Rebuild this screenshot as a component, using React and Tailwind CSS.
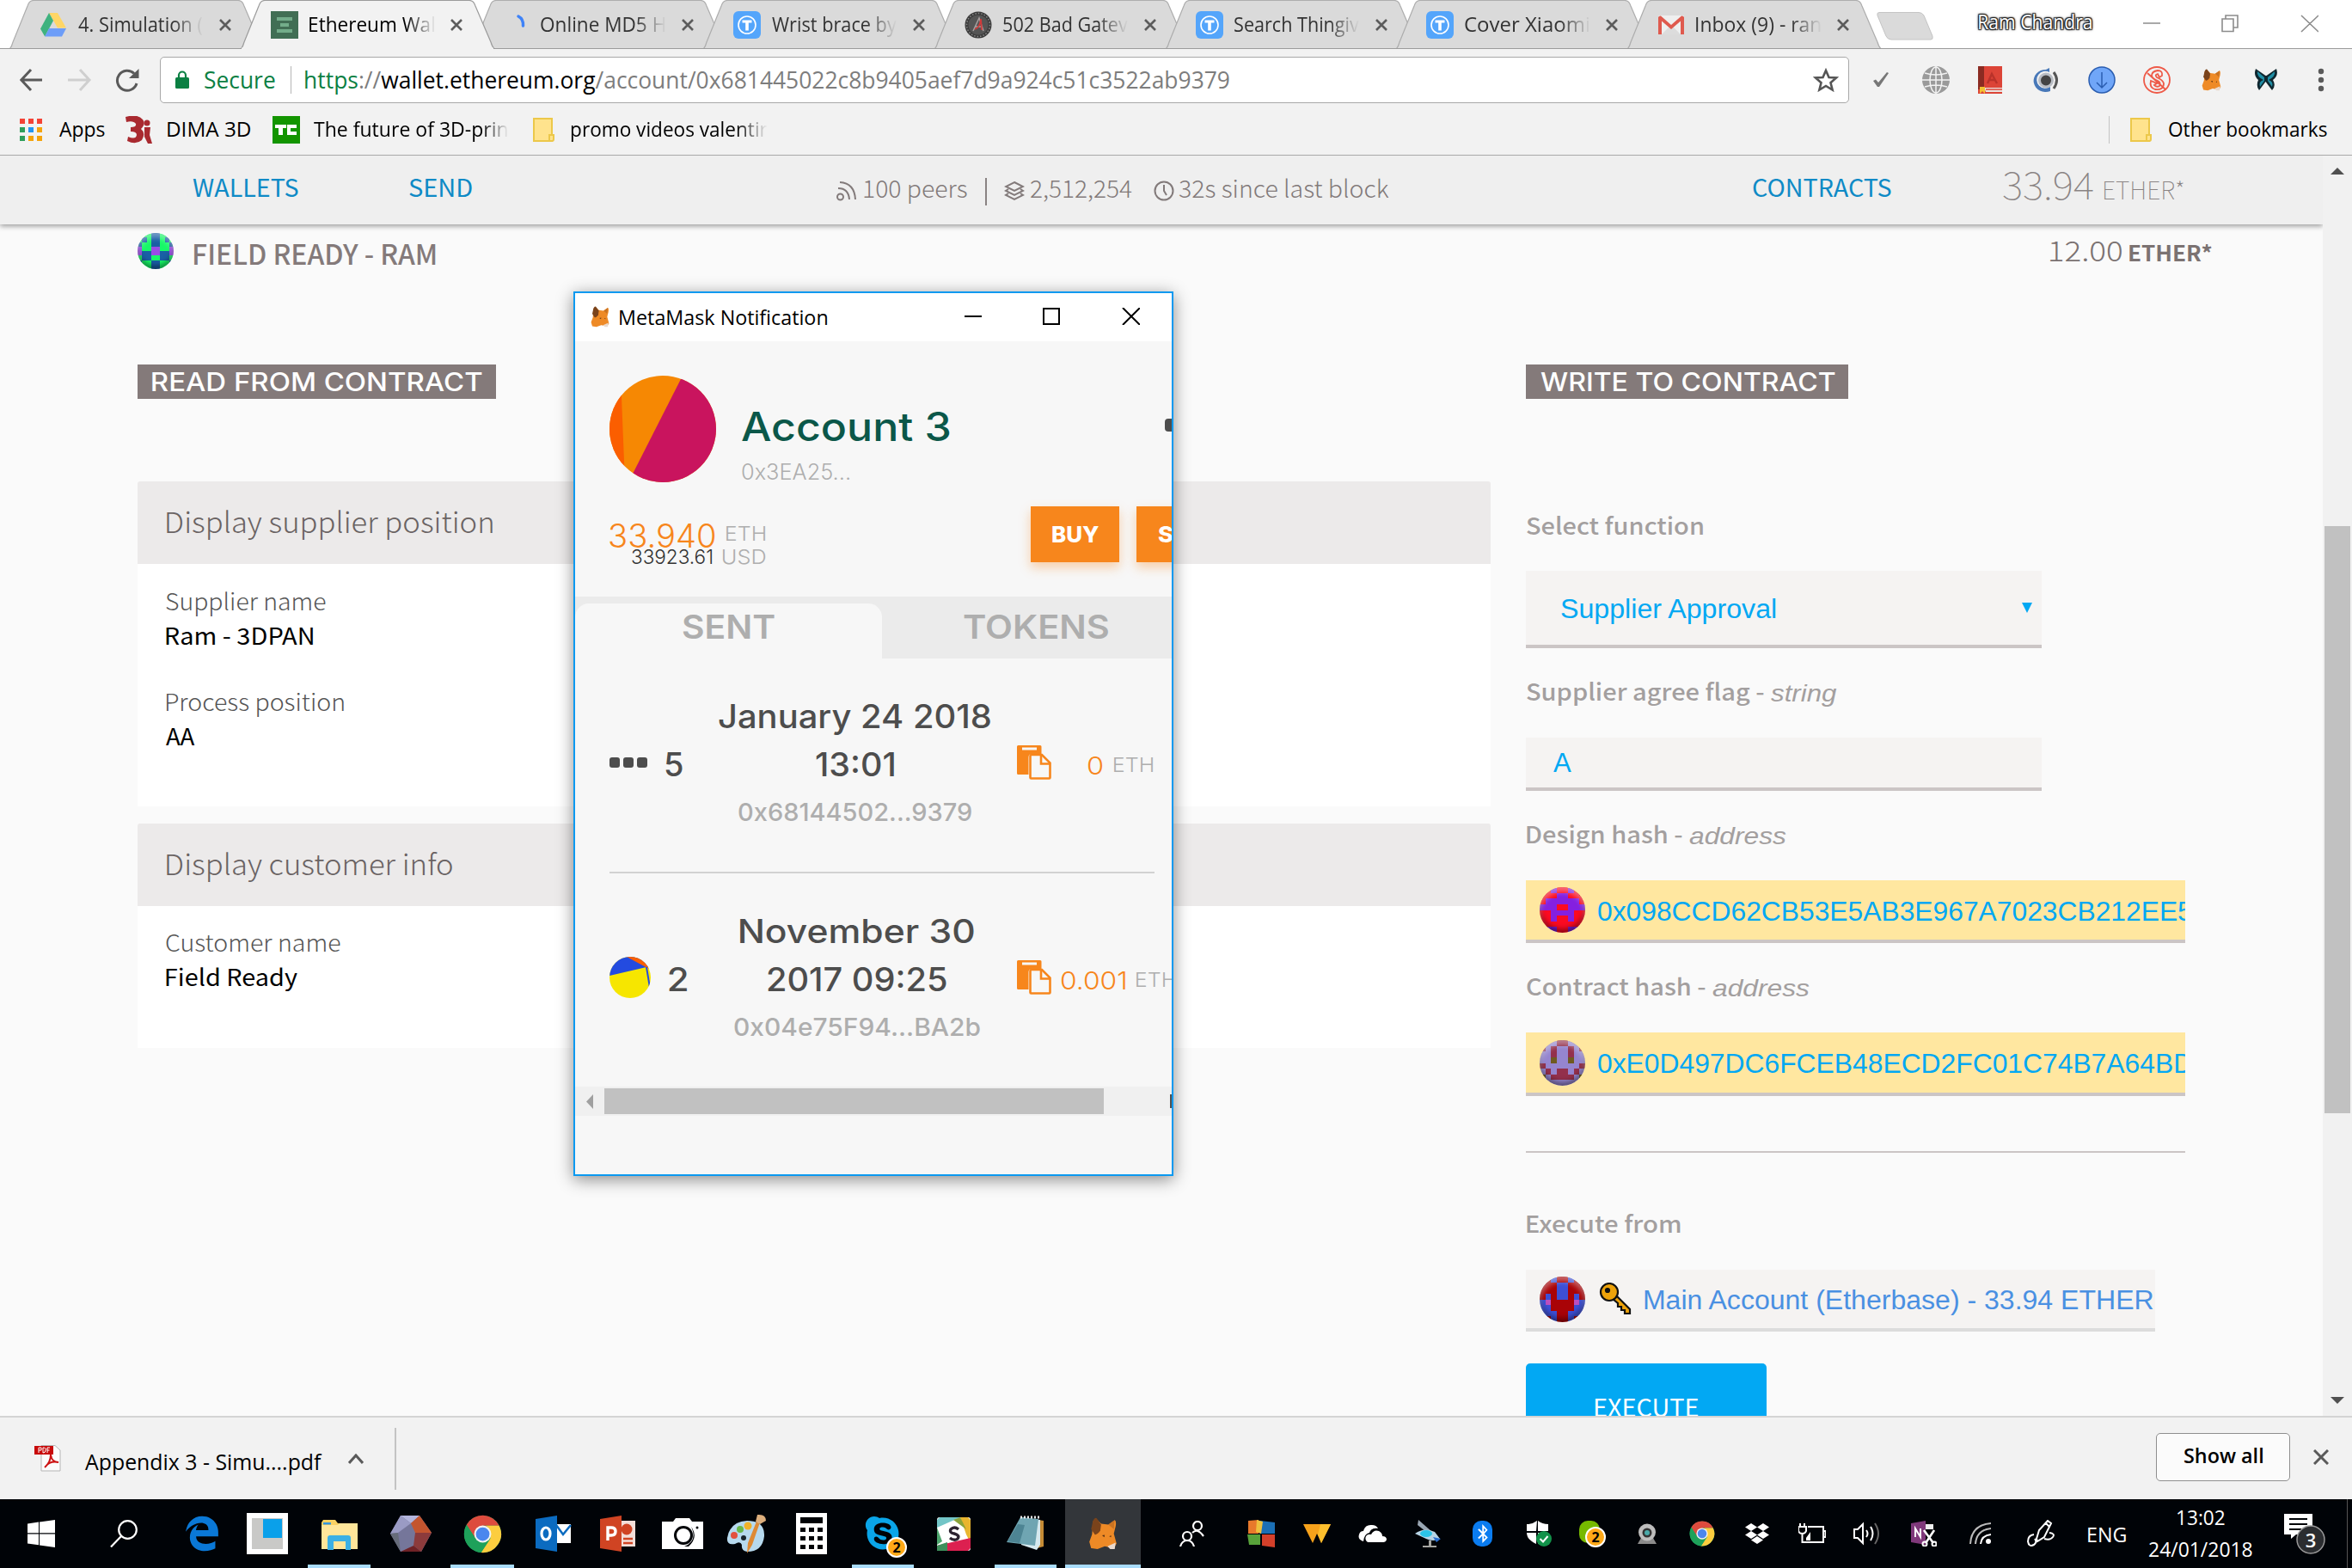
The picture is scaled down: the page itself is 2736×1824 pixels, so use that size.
import React, { useLayoutEffect, useRef } from "react";
import { FaBluetoothB, FaDropbox, FaEdgeLegacy, FaSkype } from "react-icons/fa";

/* Text whose ink fills the width of its box; the box is as tall as the capitals. */
function Fit({ className = "", inner = "", children }) {
  const box = useRef(null);
  const text = useRef(null);
  useLayoutEffect(() => {
    const b = box.current;
    const t = text.current;
    const cs = getComputedStyle(t);
    const ctx = document.createElement("canvas").getContext("2d");
    ctx.font = `${cs.fontStyle} ${cs.fontWeight} ${cs.fontSize} ${cs.fontFamily}`;
    const m = ctx.measureText(t.textContent);
    const ink = m.actualBoundingBoxLeft + m.actualBoundingBoxRight;
    const s = b.clientWidth / ink;
    const asc = m.fontBoundingBoxAscent;
    const desc = m.fontBoundingBoxDescent;
    const base = (t.offsetHeight - asc - desc) / 2 + asc;
    const x = m.actualBoundingBoxLeft * s;
    const y = b.clientHeight - base;
    t.style.transform = `translate(${x}px, ${y}px) scaleX(${s})`;
  }, []);
  return (
    <div ref={box} className={`shrink-0 ${className}`}>
      <div ref={text} className={`w-max origin-top-left whitespace-pre leading-[1.5] ${inner}`}>{children}</div>
    </div>
  );
}

const SRC = "font-['Noto_Sans_CJK_SC',sans-serif]";
const MONT = "font-['Inter',sans-serif]";
const ARIAL = "font-['Liberation_Sans',sans-serif]";

function Identicon({ className, rows, colors }) {
  return (
    <div className={`relative shrink-0 overflow-hidden rounded-full ${className}`}>
      <svg viewBox="0 0 8 8" className="block h-full w-full" shapeRendering="crispEdges">
        {rows.map((r, y) =>
          [...r, ...[...r].reverse()].map((c, x) => (
            <rect key={`${x}-${y}`} x={x} y={y} width="1.02" height="1.02" fill={colors[c]} />
          ))
        )}
      </svg>
      <div className="absolute inset-0 rounded-full shadow-[inset_0_5px_6px_rgba(255,255,255,0.4),inset_0_-4px_6px_rgba(0,0,0,0.45)]" />
    </div>
  );
}

function Fox({ className }) {
  return (
    <svg viewBox="0 0 32 36" className={`shrink-0 ${className}`}>
      <path d="M5 5 Q7 1 10 3 L14 7 L22 8 L29 3 Q31 4 30 10 L28 18 L31 29 L28 34 L18 32 L10 35 L3 34 L1 27 L4 19 Z" fill="#ee8a26" />
      <path d="M5 4 Q7 0 9 1 L14 8 L13 15 Q9 20 7 19 L3 13 Z" fill="#7a431b" />
      <path d="M29 3 L22 8 L28 13 Z" fill="#c97322" />
      <path d="M15 20 L18 19.500 L17.500 22 Z M23 21 L25 20 L25 22 Z" fill="#5b3314" />
      <path d="M21 32 L30 28 L29 35 L24 35 Z" fill="#e9d9cd" />
    </svg>
  );
}

function ChromeLogo({ className }) {
  return (
    <svg viewBox="0 0 48 48" className={`shrink-0 ${className}`}>
      <circle cx="24" cy="24" r="23" fill="#1ea15a" />
      <path d="M4 12.5 A23 23 0 0 1 44.5 13.5 L24 13.5 L15 29 Z" fill="#dd4b3e" />
      <path d="M44.3 13.5 A23 23 0 0 1 22 47 L33.5 29.5 L33 19 L28 13.5 Z" fill="#fccd3f" />
      <path d="M4 12.5 L14.5 29.5 L24 34 L33.5 29.5 L22 47 A23 23 0 0 1 4 12.5 Z" fill="#1ea15a" />
      <circle cx="24" cy="24" r="10.6" fill="#f3f3f3" />
      <circle cx="24" cy="24" r="8.4" fill="#4a87ee" />
    </svg>
  );
}

function PasteIcon({ className }) {
  return (
    <svg viewBox="0 0 40 40" className={`shrink-0 ${className}`} fill="#f7861c">
      <path d="M1.500 0 H27 Q28.500 0 28.500 1.500 V10 H17 Q13.500 10 13.500 14 V34 H1.500 Q0 34 0 32.500 V1.500 Q0 0 1.500 0 Z" />
      <rect x="6" y="2.500" width="17" height="3" fill="#f7f7f7" />
      <path d="M15.500 12 V37.500 Q15.500 38.500 16.500 38.500 H37.500 Q38.500 38.500 38.500 37.500 V20.500 L29 11 H16.500 Q15.500 11 15.500 12 Z" fill="#f7f7f7" stroke="#f7861c" strokeWidth="2.600" />
      <path d="M28 11 V21.500 H38.500" fill="none" stroke="#f7861c" strokeWidth="2.600" />
    </svg>
  );
}

const Drive = () => (
  <svg viewBox="0 0 30 28" className="h-[28px] w-[30px]">
    <path d="M10 0 H20 L30 17.5 H20 Z" fill="#ffd665" />
    <path d="M10 0 L15 9 L5.2 27.5 L0 18.5 Z" fill="#3fb27f" />
    <path d="M10 18 H30 L25 27.5 H5.2 Z" fill="#6d9df8" />
  </svg>
);
const EthDoc = () => (
  <svg viewBox="0 0 32 32" className="h-8 w-8">
    <rect width="32" height="32" fill="#416e54" />
    <path d="M7 7 H25 V11 H7 Z M11 14 H21 V18 H11 Z M7 21 H25 V25 H7 Z" fill="#73ac8a" />
  </svg>
);
const Spinner = () => (
  <svg viewBox="0 0 32 32" className="h-8 w-8">
    <path d="M19 6 Q25 9 24.500 17" fill="none" stroke="#3f83f8" strokeWidth="3.500" strokeLinecap="round" />
  </svg>
);
const Thingi = () => (
  <svg viewBox="0 0 32 32" className="h-8 w-8">
    <rect width="32" height="32" rx="6" fill="#54a5fb" />
    <circle cx="16" cy="16" r="10" fill="none" stroke="#fff" strokeWidth="1.600" />
    <path d="M10.500 10.500 H21.500 V13.500 H17.800 V22.500 H14.200 V13.500 H10.500 Z" fill="#fff" />
  </svg>
);
const Badge502 = () => (
  <svg viewBox="0 0 32 32" className="h-8 w-8">
    <circle cx="16" cy="16" r="15.500" fill="#3c3c3c" />
    <circle cx="16" cy="16" r="11.500" fill="#555" />
    <circle cx="16" cy="16" r="13.500" fill="none" stroke="#8a8a8a" strokeWidth="1.500" strokeDasharray="1.500 2" />
    <path d="M10 23 L17 8 L22 23 M12 18 H21" fill="none" stroke="#a9a0a0" strokeWidth="1.500" />
    <path d="M12 21 Q18 19 19 9 L20 22" fill="none" stroke="#cf3a3a" strokeWidth="1.800" />
  </svg>
);
const Gmail = () => (
  <svg viewBox="0 0 30 22" className="h-[22px] w-[30px]">
    <rect width="30" height="22" rx="1.500" fill="#efefef" />
    <path d="M4 22 L15 11 L26 22 Z" fill="#dcdcdc" />
    <path d="M0 22 V2 Q1 0 3 0.500 L15 11 L27 0.500 Q29 0 30 2 V22 H26 V6.500 L15 16 L4 6.500 V22 Z" fill="#df5a4e" />
  </svg>
);

const TABS = [
  [Drive, "4. Simulation (", false],
  [EthDoc, "Ethereum Wal", true],
  [Spinner, "Online MD5 H", false],
  [Thingi, "Wrist brace by", false],
  [Badge502, "502 Bad Gatev", false],
  [Thingi, "Search Thingiv", false],
  [Thingi, "Cover Xiaomi", false],
  [Gmail, "Inbox (9) - ran", false],
];

function Tab({ Icon, text, active }) {
  return (
    <div className={`relative mr-[-26.100px] h-[57px] w-[295px] shrink-0 ${active ? "z-10" : ""}`}>
      <svg viewBox="0 0 295 57" className="absolute inset-0 h-full w-full">
        <path
          d="M0 57 Q2.500 55 4 49 L21 7 Q23 0.500 28 0.500 H266 Q271 0.500 273 7 L291 49 Q293 56 296 57 Z"
          fill={active ? "#f2f2f2" : "#dadada"}
          stroke={active ? "#9b9b9b" : "#adadad"}
          strokeWidth="1.200"
        />
        {active ? <rect x="1" y="55.500" width="293" height="2" fill="#f2f2f2" /> : <rect y="56" width="295" height="1" fill="#9b9b9b" />}
      </svg>
      <div className="relative flex h-full items-center">
        <div className="ml-[35px] flex w-[32px] justify-center">
          <Icon />
        </div>
        <Fit
          className={`ml-[13px] h-[16px] w-[145px] text-[23.500px] ${active ? "text-black" : "text-[#333]"}`}
          inner="[mask-image:linear-gradient(to_right,black_76%,transparent_100%)]"
        >
          {text}
        </Fit>
        <svg viewBox="0 0 16 16" className="ml-[18px] h-4 w-4">
          <path d="M2 2 L14 14 M14 2 L2 14" stroke="#5c5c5c" strokeWidth="2.600" />
        </svg>
      </div>
    </div>
  );
}

function TabStrip() {
  return (
    <div className="relative flex h-[57px] shrink-0 bg-white">
      <div className="absolute bottom-0 left-0 h-px w-full bg-[#9b9b9b]" />
      <div className="flex pl-[11px]">
        {TABS.map(([Icon, text, active], i) => (
          <Tab key={i} Icon={Icon} text={text} active={active} />
        ))}
      </div>
      <svg viewBox="0 0 68 34" className="mt-[14px] ml-[20px] h-[34px] w-[68px] shrink-0">
        <path d="M4 0.500 H50 Q54 0.500 56 4 L66 28 Q67 32 64 32 H18 Q14 32 12 28 L2 4 Q1 0.500 4 0.500 Z" fill="#dadada" stroke="#c4c4c4" />
      </svg>
      <Fit
        className="mt-[17px] ml-[52px] h-[17px] w-[131px] text-[23px] text-white"
        inner="[text-shadow:0_0_2px_#222,1px_1px_1px_#222,-1px_-1px_1px_#222,1px_-1px_1px_#222,-1px_1px_1px_#222,0_0_4px_#333]"
      >
        Ram Chandra
      </Fit>
      <svg viewBox="0 0 204 21" className="mt-[17px] ml-[60px] h-[21px] w-[204px] shrink-0" fill="none" stroke="#8c8c8c" strokeWidth="1.600">
        <path d="M0 10 H20 M92 5 H105 V19.500 H92 Z M96 5 V1 H110 V15 H105 M184 1 L204 20 M204 1 L184 20" />
      </svg>
    </div>
  );
}

function Toolbar() {
  return (
    <div className="flex h-[72px] shrink-0 items-center pl-[23px]">
      <svg viewBox="0 0 139 28" className="h-[28px] w-[139px] shrink-0" fill="none" strokeWidth="3">
        <path d="M13 2 L1.800 14 L13 26 M2 14 H26" stroke="#5a5a5a" />
        <path d="M70 2 L81 14 L70 26 M80 14 H56" stroke="#cfcfcf" />
        <path d="M136 18 A11.500 11.500 0 1 1 133 6.500" stroke="#5a5a5a" />
        <path d="M138.500 1 V12 H127 Z" fill="#5a5a5a" />
      </svg>
      <div className="ml-[24px] flex h-[54px] w-[1965px] shrink-0 items-center rounded-[5px] border border-[#a8a8a8] bg-white pl-[17px]">
        <svg viewBox="0 0 16 22" className="h-[22px] w-4">
          <rect y="8" width="16" height="13" rx="1.500" fill="#0b8043" />
          <path d="M4 9 V5.500 A4 4 0 0 1 12 5.500 V9" fill="none" stroke="#0b8043" strokeWidth="2.200" />
        </svg>
        <Fit className="ml-[18px] h-[20px] w-[82px] text-[28px] text-[#0b8043]">Secure</Fit>
        <div className="ml-[18px] h-8 w-px bg-[#b5b5b5]" />
        <Fit className="ml-[16px] h-[20px] w-[1075px] text-[28px] text-[#7d7d7d]">
          <span className="text-[#0b8043]">https</span>://<span className="text-black">wallet.ethereum.org</span>
          /account/0x681445022c8b9405aef7d9a924c51c3522ab9379
        </Fit>
        <svg viewBox="0 0 30 28" className="ml-[679px] h-[28px] w-[30px] shrink-0" fill="none" stroke="#555" strokeWidth="2.600">
          <path d="M15 3 L18.500 11 L27 11.500 L20.500 17.200 L22.600 25.500 L15 21 L7.400 25.500 L9.500 17.200 L3 11.500 L11.500 11 Z" />
        </svg>
      </div>
      <svg viewBox="0 0 18 18" className="ml-[28px] h-[18px] w-[18px]">
        <path d="M0 10 L3 8.500 L6 12 L16 0 L18 1 L7 17 H5 Z" fill="#777" />
      </svg>
      <svg viewBox="0 0 32 32" className="ml-[39px] h-8 w-8" fill="none" stroke="#f2f2f2" strokeWidth="1.500">
        <circle cx="16" cy="16" r="16" fill="#9a9a9a" stroke="none" />
        <ellipse cx="16" cy="16" rx="7" ry="15" />
        <path d="M16 0 V32 M0 16 H32 M3 8 Q16 12 29 8 M3 24 Q16 20 29 24" />
      </svg>
      <svg viewBox="0 0 28 32" className="ml-[33px] h-8 w-7">
        <rect width="28" height="32" fill="#dc4437" />
        <rect width="7" height="27" fill="#8b2b22" />
        <path d="M7 25 H28 V30 H9 Z" fill="#e9e2df" />
        <path d="M9 27 H28" stroke="#dc4437" strokeWidth="1.500" />
        <path d="M2 24 H8 V32 L5 29 L2 32 Z" fill="#f2c230" />
        <path d="M11 20 L16 9 L22 20 M13 16 H20" fill="none" stroke="#b9322a" strokeWidth="2.400" />
      </svg>
      <svg viewBox="0 0 30 30" className="ml-[36px] h-[30px] w-[30px]" fill="none">
        <path d="M19 1 V6 A10 10 0 1 0 20 23 V28 A14 13 0 1 1 15 3 Z" fill="#4878b8" />
        <circle cx="15" cy="15.500" r="7.500" stroke="#b9bdc4" strokeWidth="3" fill="#444" />
        <path d="M24 6 Q31 15 24 25" stroke="#555" strokeWidth="3" />
      </svg>
      <svg viewBox="0 0 32 32" className="ml-[34px] h-8 w-8" fill="none" stroke="#2a5db0" strokeWidth="1.500">
        <circle cx="16" cy="16" r="15" fill="#70a6f8" />
        <path d="M16 7 V25 M10 19 L16 25 L22 19" />
      </svg>
      <svg viewBox="0 0 32 32" className="ml-[32px] h-8 w-8" fill="none" stroke="#ee5a48" strokeWidth="1.800">
        <circle cx="16" cy="16" r="15" />
        <path d="M22 11 Q23 5 17 5 Q10 6 10 11 Q11 15 17 17 Q21 19 19 23 Q16 25 13 22 L16 20 L9 17 Q7 25 14 27 Q24 28 24 20 Q23 16 16 13 Q13 10 17 9 L19 13 Z M5 8 L26 27" />
      </svg>
      <Fox className="ml-[35px] h-[26px] w-[25px]" />
      <svg viewBox="0 0 28 26" className="ml-[37px] h-[26px] w-7">
        <path d="M13.500 8 L2 0 Q-1 8 5 13 Q2 20 6 25 L13.500 15 L21 25 Q26 20 22 13 Q29 8 26 0 L14.500 8 Z" fill="#10272f" />
        <path d="M12 10 L4 3 Q3 9 11 13 Q5 15 7 21 L12 14 Z M16 10 L24 3 Q25 9 17 13 Q23 15 21 21 L16 14 Z" fill="#1f8ea5" />
      </svg>
      <svg viewBox="0 0 8 28" className="ml-[46px] h-7 w-2" fill="#5a5a5a">
        <circle cx="4" cy="4" r="3.200" />
        <circle cx="4" cy="14" r="3.200" />
        <circle cx="4" cy="24" r="3.200" />
      </svg>
    </div>
  );
}

const Folder = ({ className }) => (
  <svg viewBox="0 0 25 28" className={`h-7 w-[25px] shrink-0 ${className}`} fill="#ffe38d" stroke="#ecc84a" strokeWidth="2">
    <path d="M1 1 H22 V27 H1 Z" />
    <path d="M19 27 V20 H24 V25 Q24 27 22 27 Z" />
  </svg>
);

const DOTS = ["#f44336", "#f44336", "#f44336", "#2f9e5b", "#2196f3", "#f5a40c", "#2f9e5b", "#f5a40c", "#f5a40c"];

function Bookmarks() {
  return (
    <div className="flex h-[52px] shrink-0 items-center border-b border-[#a9a9a9] pb-[8px] pl-[23px]">
      <div className="grid w-[26px] grid-cols-3 gap-x-[4px] gap-y-[4px]">
        {DOTS.map((c, i) => (
          <svg key={i} viewBox="0 0 6 6" className="h-[6px] w-[6px]">
            <rect width="6" height="6" fill={c} />
          </svg>
        ))}
      </div>
      <Fit className="ml-[20px] h-[17px] w-[53px] text-[24px] text-black">Apps</Fit>
      <svg viewBox="0 0 31 32" className="ml-[24px] h-8 w-[31px]" fill="#a92a30">
        <path d="M0 1 Q14 -3 20 4 Q24 9 18 15 Q24 20 19 28 Q12 34 2 29 L3 24 Q12 28 13 22 Q13 18 6 18 V13 Q13 13 12 9 Q9 5 1 7 Z" />
        <circle cx="25" cy="8" r="3.500" />
        <path d="M22 13 H29 L28 22 L31 32 H26 L22 24 Z" />
      </svg>
      <Fit className="ml-[18px] h-[17px] w-[96px] text-[24px] text-black">DIMA 3D</Fit>
      <svg viewBox="0 0 32 32" className="ml-[26px] h-8 w-8">
        <rect width="32" height="32" fill="#139500" />
        <path d="M3 10 H16 V14 H12 V22 H7 V14 H3 Z M17 10 H28 V14 H21 V18 H28 V22 H17 Z" fill="#fff" />
      </svg>
      <Fit className="ml-[16px] h-[17px] w-[225px] text-[24px] text-black" inner="[mask-image:linear-gradient(to_right,black_86%,transparent_100%)]">
        The future of 3D-prin
      </Fit>
      <Folder className="ml-[30px]" />
      <Fit className="ml-[20px] h-[17px] w-[228px] text-[24px] text-black" inner="[mask-image:linear-gradient(to_right,black_84%,transparent_100%)]">
        promo videos valentir
      </Fit>
      <div className="ml-[1560px] h-8 w-px bg-[#c4c4c4]" />
      <Folder className="ml-[24px]" />
      <Fit className="ml-[20px] h-[17px] w-[184px] text-[24px] text-black">Other bookmarks</Fit>
    </div>
  );
}

function WalletNav() {
  return (
    <div className={`relative z-10 flex h-[80px] w-[2702px] shrink-0 items-start bg-[#efefef] shadow-[0_2px_6px_rgba(0,0,0,0.4)] ${SRC}`}>
      <Fit className="mt-[27px] ml-[224px] h-[21px] w-[123px] text-[28px] text-[#0e8ac6]">WALLETS</Fit>
      <Fit className="mt-[27px] ml-[129px] h-[21px] w-[73px] text-[28px] text-[#0e8ac6]">SEND</Fit>
      <svg viewBox="0 0 24 24" className="mt-[29px] ml-[424px] h-6 w-6 shrink-0" fill="none" stroke="#827a7a" strokeWidth="2">
        <circle cx="4.500" cy="19" r="3.500" />
        <path d="M2 9 Q14 9 15 22 M4 2 Q21 3 22 22" />
      </svg>
      <Fit className="mt-[28px] ml-[8px] h-[21px] w-[120px] text-[28px] font-light text-[#827a7a]">100 peers</Fit>
      <div className="mt-[26px] ml-[21px] h-[32px] w-[1.500px] bg-[#8a8383]" />
      <svg viewBox="0 0 24 24" className="mt-[29px] ml-[20px] h-6 w-6 shrink-0" fill="none" stroke="#827a7a" strokeWidth="2">
        <path d="M12 2 L22 7 L12 12 L2 7 Z M5 10 L2 12 L12 17 L22 12 L19 10 M5 15 L2 17 L12 22 L22 17 L19 15" />
      </svg>
      <Fit className="mt-[28px] ml-[7px] h-[21px] w-[118px] text-[28px] font-light text-[#827a7a]">2,512,254</Fit>
      <svg viewBox="0 0 24 24" className="mt-[29px] ml-[25px] h-6 w-6 shrink-0" fill="none" stroke="#827a7a" strokeWidth="2">
        <circle cx="12" cy="12" r="10.500" />
        <path d="M12 5 V12 L15 17" />
      </svg>
      <Fit className="mt-[28px] ml-[5px] h-[21px] w-[245px] text-[28px] font-light text-[#827a7a]">32s since last block</Fit>
      <Fit className="mt-[27px] ml-[423px] h-[21px] w-[161px] text-[28px] text-[#0e8ac6]">CONTRACTS</Fit>
      <Fit className="mt-[18px] ml-[130px] h-[33px] w-[105px] text-[44px] font-thin text-[#8a8484]">33.94</Fit>
      <Fit className="mt-[30px] ml-[13px] h-[21px] w-[92px] text-[28px] font-thin text-[#8a8484]">ETHER*</Fit>
    </div>
  );
}

const Banner = ({ className, textClass, children }) => (
  <div className={`flex h-[40px] items-center justify-center bg-[#847a7a] ${MONT} ${className}`}>
    <Fit className={`ml-[1px] h-[22px] text-[30px] font-medium text-white ${textClass}`}>{children}</Fit>
  </div>
);

const Key28 = "h-[20px] text-[27px] font-light text-[#555]";
const Val28 = "h-[20px] text-[27px] text-black";

function ReadColumn() {
  return (
    <div className={`flex w-[1574px] shrink-0 flex-col ${SRC}`}>
      <Banner className="w-[417px]" textClass="w-[384px]">READ FROM CONTRACT</Banner>
      <div className="mt-[96px] flex h-[96px] items-center rounded-t-[3px] bg-[#eceaea] pl-[34px]">
        <Fit className="mt-[2px] h-[24px] w-[379px] text-[33px] font-light text-[#6a6363]">Display supplier position</Fit>
      </div>
      <div className="h-[282px] bg-white pt-[35px] pl-[33px]">
        <Fit className={`w-[186px] ${Key28}`}>Supplier name</Fit>
        <Fit className={`mt-[20px] w-[171px] ${Val28}`}>Ram - 3DPAN</Fit>
        <Fit className={`mt-[57px] w-[207px] ${Key28}`}>Process position</Fit>
        <Fit className={`mt-[20px] w-[34px] ${Val28}`}>AA</Fit>
      </div>
      <div className="mt-[20px] flex h-[96px] items-center rounded-t-[3px] bg-[#eceaea] pl-[34px]">
        <Fit className="mt-[2px] h-[24px] w-[332px] text-[33px] font-light text-[#6a6363]">Display customer info</Fit>
      </div>
      <div className="h-[165px] bg-white pt-[34px] pl-[33px]">
        <Fit className={`w-[203px] ${Key28}`}>Customer name</Fit>
        <Fit className={`mt-[20px] w-[153px] ${Val28}`}>Field Ready</Fit>
      </div>
    </div>
  );
}

function Label({ className, width, type, typeWidth, children }) {
  return (
    <div className={`flex items-end gap-[8px] pl-px text-[#a39f9f] ${className}`}>
      <Fit className={`h-[20px] text-[27px] font-medium ${SRC} ${width}`}>{children}</Fit>
      {type && <Fit className={`h-[20px] text-[28px] italic ${ARIAL} ${typeWidth}`}>{type}</Fit>}
    </div>
  );
}

function HashField({ className, rows, colors, children }) {
  return (
    <div className={`flex w-[767px] items-center overflow-hidden border-b-4 border-[#cbc5c5] bg-[#ffe7a0] pl-[16px] ${className}`}>
      <Identicon className="h-[53px] w-[53px]" rows={rows} colors={colors} />
      <Fit className={`mt-[1px] ml-[15px] h-[23px] w-[691px] text-[32px] text-[#02a8f3] ${ARIAL}`}>{children}</Fit>
    </div>
  );
}

function WriteColumn() {
  return (
    <div className="flex w-[767px] shrink-0 flex-col">
      <Banner className="w-[375px]" textClass="w-[343px]">WRITE TO CONTRACT</Banner>
      <Label className="mt-[139px]" width="w-[205px]">Select function</Label>
      <div className="mt-[41px] flex h-[90px] w-[600px] items-center justify-between border-b-4 border-[#cbc5c5] bg-[#f5f3f2] pr-[11px] pl-[41px]">
        <Fit className={`mt-[4px] h-[22px] w-[251px] text-[31px] text-[#02a8f3] ${ARIAL}`}>Supplier Approval</Fit>
        <svg viewBox="0 0 12 12" className="h-3 w-3">
          <path d="M0 0 H12 L6 12 Z" fill="#02a8f3" />
        </svg>
      </div>
      <Label className="mt-[42px]" width="w-[276px]" type="string" typeWidth="w-[77px]">Supplier agree flag -</Label>
      <div className="mt-[42px] flex h-[62px] w-[600px] items-center border-b-4 border-[#cbc5c5] bg-[#f5f3f2] pl-[32px]">
        <Fit className={`mt-[2px] h-[22px] w-[21px] text-[31px] text-[#02a8f3] ${ARIAL}`}>A</Fit>
      </div>
      <Label className="mt-[42px]" width="w-[181px]" type="address" typeWidth="w-[113px]">Design hash -</Label>
      <HashField
        className="mt-[42px] h-[73px]"
        rows={["rrpr", "rrrp", "rppp", "pppr", "rrpp", "rrpr", "rrrr", "rpPr"]}
        colors={{ r: "#fb0a22", p: "#8420e0", P: "#7a1bd0" }}
      >
        0x098CCD62CB53E5AB3E967A7023CB212EE5
      </HashField>
      <Label className="mt-[42px]" width="w-[208px]" type="address" typeWidth="w-[113px]">Contract hash -</Label>
      <HashField
        className="mt-[42px] h-[74px]"
        rows={["lllb", "blbl", "llbl", "llol", "blll", "lblb", "olbb", "llll"]}
        colors={{ l: "#9585cf", b: "#93304c", o: "#6f5a20" }}
      >
        0xE0D497DC6FCEB48ECD2FC01C74B7A64BD
      </HashField>
      <div className="mt-[64px] h-[2px] bg-[#cbc5c5]" />
      <Label className="mt-[74px]" width="w-[179px]">Execute from</Label>
      <div className="mt-[42px] flex h-[72px] w-[732px] items-center border-b-4 border-[#dcdcdc] bg-[#f5f3f2] pl-[16px]">
        <Identicon
          className="h-[53px] w-[53px]"
          rows={["rrbr", "rrrb", "rrrb", "rbrb", "bprr", "bbrr", "bbbr", "rrbr"]}
          colors={{ r: "#a90307", b: "#3d4fd6", p: "#bb4fc0" }}
        />
        <svg viewBox="0 0 38 38" className="ml-[16px] h-[38px] w-[38px] shrink-0" fill="#eda20a" stroke="#111" strokeWidth="2.200">
          <path d="M20 15 L36 31 V36 H30 V32 H26 V28 H22 V24 L16 19 Z" />
          <circle cx="12" cy="11" r="10" />
          <circle cx="10" cy="9" r="2" fill="#111" />
        </svg>
        <Fit className={`mt-[4px] ml-[15px] h-[22px] w-[593px] text-[31px] text-[#4a90e2] ${ARIAL}`}>Main Account (Etherbase) - 33.94 ETHER</Fit>
      </div>
      <div className={`mt-[37px] flex h-[120px] w-[280px] shrink-0 justify-center rounded-[5px] bg-[#02a8f3] pt-[42px] ${SRC}`}>
        <Fit className="h-[20px] w-[120px] text-[28px] text-white">EXECUTE</Fit>
      </div>
    </div>
  );
}

function Scrollbar() {
  return (
    <div className="flex h-full w-[34px] shrink-0 flex-col items-center bg-[#f1f1f1]">
      <svg viewBox="0 0 16 8" className="mt-[14px] h-2 w-4">
        <path d="M0 8 L8 0 L16 8 Z" fill="#505050" />
      </svg>
      <div className="mt-[409px] h-[683px] w-[30px] bg-[#c1c1c1]" />
      <svg viewBox="0 0 16 8" className="mt-[330px] h-2 w-4">
        <path d="M0 0 L8 8 L16 0 Z" fill="#505050" />
      </svg>
    </div>
  );
}

function WalletPage() {
  return (
    <div className="flex h-[1466px] shrink-0 overflow-hidden bg-[#fafafa]">
      <div className="flex w-[2702px] shrink-0 flex-col overflow-hidden">
        <WalletNav />
        <div className={`flex items-start pt-[10px] pl-[160px] ${SRC}`}>
          <Identicon
            className="h-[42px] w-[42px]"
            rows={["gggb", "gbgb", "bggb", "pggp", "pbbp", "gbbg", "bggb", "gggb"]}
            colors={{ g: "#17f868", b: "#195fa5", p: "#9a4be6" }}
          />
          <Fit className="mt-[14px] ml-[24px] h-[24px] w-[281px] text-[33px] font-medium text-[#847a7a]">FIELD READY - RAM</Fit>
          <Fit className="mt-[10px] ml-[1878px] h-[24px] w-[83px] text-[33px] font-light text-[#7b7272]">12.00</Fit>
          <Fit className="mt-[16px] ml-[9px] h-[18px] w-[96px] text-[25px] font-bold text-[#7b7272]">ETHER*</Fit>
        </div>
        <div className="mt-[111px] flex gap-[41px] pl-[160px]">
          <ReadColumn />
          <WriteColumn />
        </div>
      </div>
      <Scrollbar />
    </div>
  );
}

function TxRow({ className, icon, nonce, nonceWidth, lines, colClass, address, addressWidth, amount, amountClass }) {
  return (
    <div className={`flex w-[800px] items-center pl-[40px] ${className}`}>
      <div className="flex w-[121px] shrink-0 items-center">
        {icon}
        <Fit className={`mt-[4px] h-[28px] text-[38px] font-medium text-[#4d4d4d] ${nonceWidth}`}>{nonce}</Fit>
      </div>
      <div className={`flex w-[330px] shrink-0 flex-col items-center text-[#4d4d4d] ${colClass}`}>
        <Fit className={`h-[28px] text-[38px] font-medium ${lines[0][1]}`}>{lines[0][0]}</Fit>
        <Fit className={`mt-[28px] h-[28px] text-[38px] font-medium ${lines[1][1]}`}>{lines[1][0]}</Fit>
        <Fit className={`mt-[31px] h-[21px] text-[29px] font-medium text-[#aeaeae] ${addressWidth}`}>{address}</Fit>
      </div>
      <PasteIcon className="ml-[23px] h-[40px] w-[40px]" />
      <Fit className={`mt-[6px] h-[21px] text-[29px] font-light text-[#f7861c] ${amountClass}`}>{amount}</Fit>
      <Fit className="mt-[4px] ml-[13px] h-[17px] w-[45px] text-[23px] font-light text-[#aeaeae]">ETH</Fit>
    </div>
  );
}

function MetaMask() {
  return (
    <div className={`absolute top-[339px] left-[667px] flex h-[1029px] w-[698px] flex-col overflow-hidden border-2 border-[#0b99f0] bg-[#f7f7f7] ${MONT} shadow-[0_4px_18px_rgba(0,0,0,0.45)]`}>
      <div className="flex h-[56px] w-full shrink-0 items-center bg-white pb-[2px] pl-[17px]">
        <Fox className="h-[25px] w-[24px]" />
        <Fit className="mt-[2px] ml-[11px] h-[17px] w-[241px] font-['Open_Sans',sans-serif] text-[24px] text-black">MetaMask Notification</Fit>
        <svg viewBox="0 0 204 20" className="ml-[160px] h-5 w-[204px] shrink-0" fill="none" stroke="#000" strokeWidth="2">
          <path d="M0 10 H20 M92 1 H110 V19 H92 Z M184 0 L204 20 M204 0 L184 20" />
        </svg>
      </div>
      <div className="flex h-[297px] shrink-0 flex-col pt-[40px] pl-[40px]">
        <div className="flex h-[124px]">
          <div className="h-[124px] w-[124px] shrink-0 overflow-hidden rounded-full">
            <svg viewBox="0 0 124 124" className="block h-full w-full">
              <rect width="124" height="124" fill="#f68803" />
              <path d="M0 0 H13 L18 124 H0 Z" fill="#fb5e00" />
              <path d="M85 0 L22 124 H124 V0 Z" fill="#c9145e" />
            </svg>
          </div>
          <div className="ml-[30px] w-[242px] shrink-0">
            <Fit className="mt-[43px] h-[33px] w-[242px] text-[46px] font-medium text-[#0b5749]">Account 3</Fit>
            <Fit className="mt-[28px] h-[18px] w-[125px] text-[25px] font-light text-[#aeaeae]">0x3EA25...</Fit>
          </div>
          <div className="mt-[50px] ml-[250px] h-[15px] w-[15px] shrink-0 rounded-[4px] bg-[#4d4d4d]" />
        </div>
        <div className="mt-[28px] flex">
          <div className="w-[490px] shrink-0 pt-[20px]">
            <div className="flex items-center">
              <Fit className="h-[28px] w-[123px] text-[38px] font-light text-[#f7861c]">33.940</Fit>
              <Fit className="mt-[-5px] ml-[13px] h-[17px] w-[45px] text-[23px] font-light text-[#aeaeae]">ETH</Fit>
            </div>
            <div className="mt-[2px] flex pl-[26px]">
              <Fit className="h-[17px] w-[93px] text-[23px] font-light text-[#333]">33923.61</Fit>
              <Fit className="ml-[13px] h-[17px] w-[50px] text-[23px] font-light text-[#aeaeae]">USD</Fit>
            </div>
          </div>
          <div className="flex h-[65px] w-[103px] shrink-0 items-center justify-center bg-[#f7861c] shadow-[0_6px_12px_rgba(247,134,28,0.36)]">
            <Fit className="h-[19px] w-[54px] text-[26px] font-extrabold text-white">BUY</Fit>
          </div>
          <div className="ml-[20px] flex h-[65px] w-[124px] shrink-0 items-center justify-center bg-[#f7861c] shadow-[0_6px_12px_rgba(247,134,28,0.36)]">
            <Fit className="h-[19px] w-[74px] text-[26px] font-extrabold text-white">SEND</Fit>
          </div>
        </div>
      </div>
      <div className="flex h-[72px] shrink-0 items-end bg-[#ebebeb]">
        <div className="flex h-[64px] w-[357px] shrink-0 justify-center rounded-t-[16px] bg-[#f7f7f7] pt-[13px]">
          <Fit className="h-[28px] w-[107px] text-[38px] font-semibold text-[#aeaeae]">SENT</Fit>
        </div>
        <div className="flex h-[64px] w-[357px] shrink-0 justify-center pt-[13px]">
          <Fit className="h-[28px] w-[168px] text-[38px] font-semibold text-[#aeaeae]">TOKENS</Fit>
        </div>
      </div>
      <TxRow
        className="mt-[53px] mb-px"
        icon={
          <div className="mr-[21px] flex gap-[4px]">
            <div className="h-[12px] w-[12px] rounded-[3px] bg-[#4d4d4d]" />
            <div className="h-[12px] w-[12px] rounded-[3px] bg-[#4d4d4d]" />
            <div className="h-[12px] w-[12px] rounded-[3px] bg-[#4d4d4d]" />
          </div>
        }
        nonce="5"
        nonceWidth="w-[20px]"
        colClass="pr-[2px]"
        lines={[["January 24 2018", "w-[316px]"], ["13:01", "w-[91px]"]]}
        address="0x68144502...9379"
        addressWidth="w-[271px]"
        amount="0"
        amountClass="ml-[42px] w-[18px]"
      />
      <div className="mt-[58px] ml-[40px] h-[2px] w-[634px] shrink-0 bg-[#d2d2d2]" />
      <TxRow
        className="mt-[53px] mb-px"
        icon={
          <div className="mr-[21px] h-[48px] w-[48px] shrink-0 overflow-hidden rounded-full">
            <svg viewBox="0 0 48 48" className="block h-full w-full">
              <rect width="48" height="48" fill="#f6e600" />
              <path d="M0 0 H48 V13 L43 12 L0 22 Z" fill="#234be0" />
              <path d="M20 0 L46 14 L48 0 Z" fill="#fb5e00" />
              <path d="M42 12 L44 12 L48 36 L46 36 Z" fill="#234be0" />
            </svg>
          </div>
        }
        nonce="2"
        nonceWidth="w-[21px]"
        colClass="pl-[4px]"
        lines={[["November 30", "w-[272px]"], ["2017 09:25", "w-[208px]"]]}
        address="0x04e75F94...BA2b"
        addressWidth="w-[286px]"
        amount="0.001"
        amountClass="ml-[11px] w-[75px]"
      />
      <div className="mt-[58px] flex h-[34px] shrink-0 items-center bg-[#f0f0f0] pl-[13px]">
        <svg viewBox="0 0 8 17" className="h-[17px] w-2">
          <path d="M8 0 L0 8.500 L8 17 Z" fill="#a0a0a0" />
        </svg>
        <div className="ml-[13px] h-[30px] w-[581px] bg-[#c1c1c1]" />
        <div className="ml-auto h-[16px] w-[2px] bg-[#505050]" />
      </div>
    </div>
  );
}

function DownloadBar() {
  return (
    <div className="flex h-[97px] shrink-0 items-center border-t-2 border-[#d4d4d4] bg-[#f2f2f2] pl-[40px]">
      <svg viewBox="0 0 31 31" className="h-[31px] w-[31px]">
        <path d="M8 0.500 H24 L30 6 V30 H8 Z" fill="#fcfcfc" stroke="#b5b5b5" />
        <rect y="1" width="22" height="10" fill="#c80a0a" />
        <path d="M5 9 V3 H8 V6 H5 M10 9 V3 Q14 3 13 6 Q13 9 10 9 M15 9 V3 H18 M15 6 H17.500" fill="none" stroke="#fff" strokeWidth="1" />
        <path d="M12 26 Q19 20 19 11 Q20 20 28 20 Q18 18 13 25" fill="none" stroke="#cc1212" strokeWidth="2" />
      </svg>
      <Fit className="mt-[10px] ml-[28px] h-[18px] w-[276px] text-[25px] text-black">Appendix 3 - Simu....pdf</Fit>
      <svg viewBox="0 0 18 12" className="ml-[30px] h-3 w-[18px]">
        <path d="M1 11 L9 2 L17 11" fill="none" stroke="#5a5a5a" strokeWidth="3" />
      </svg>
      <div className="ml-[36px] h-[72px] w-[2px] bg-[#c4c4c4]" />
      <div className="mb-[4px] ml-[2047px] flex h-[56px] w-[156px] shrink-0 items-center justify-center rounded-[5px] border border-[#8f8f8f] bg-[#fbfbfb]">
        <Fit className="mb-[2px] h-[17px] w-[91px] text-[24px] font-semibold text-black">Show all</Fit>
      </div>
      <svg viewBox="0 0 18 18" className="mb-[3px] ml-[27px] h-[18px] w-[18px]">
        <path d="M1 1 L17 17 M17 1 L1 17" stroke="#5a5a5a" strokeWidth="3" />
      </svg>
    </div>
  );
}

const Slot = ({ className, running, active, children }) => (
  <div className={`relative flex h-full shrink-0 items-center justify-center ${active ? "bg-[#33363a]" : ""} ${className}`}>
    {children}
    {running && <div className="absolute bottom-0 left-0 h-[4px] w-full bg-[#a9dcfb]" />}
  </div>
);

function Taskbar() {
  return (
    <div className="flex h-[80px] shrink-0 items-center bg-[#000307] text-white">
      <svg viewBox="0 0 32 32" className="ml-[32px] h-8 w-8 shrink-0" fill="#fff">
        <path d="M0 4.500 L13 2.600 V15.300 H0 Z M14 2.400 L32 0 V15.300 H14 Z M0 16.400 H13 V29.300 L0 27.500 Z M14 16.400 H32 V32 L14 29.500 Z" />
      </svg>
      <svg viewBox="0 0 32 32" className="ml-[64px] h-8 w-8 shrink-0" fill="none" stroke="#fff" strokeWidth="2.200">
        <circle cx="20.500" cy="11.500" r="10.300" />
        <path d="M13 19 L1 31.500" />
      </svg>
      <FaEdgeLegacy className="ml-[54px] h-[44px] w-[42px] shrink-0 text-[#0a78d6]" />
      <svg viewBox="0 0 48 48" className="ml-[31px] h-12 w-12 shrink-0">
        <rect width="48" height="48" fill="#fff" />
        <rect x="6" y="6" width="36" height="36" fill="#c9c9c7" />
        <rect x="19" y="7" width="22" height="22" fill="#0aa0ea" />
      </svg>
      <Slot className="ml-[23px] w-[73px]" running>
        <svg viewBox="0 0 42 36" className="mt-[3px] h-9 w-[42px]">
          <path d="M0 3 L2 0 H16 L19 4 H41 V34 H0 Z" fill="#f9d163" />
          <path d="M0 6 H19 L21 4 H42 V34 H0 Z" fill="#ffe69a" />
          <rect x="2" y="3" width="9" height="2.500" fill="#3596dc" />
          <path d="M7 35 V21 Q7 18 10 18 H31 Q34 18 34 21 V35 H28 V25 H14 V35 Z" fill="#3bb0e5" />
        </svg>
        <div className="absolute right-0 bottom-0 h-[4px] w-[17px] bg-[#7e9fb3]" />
      </Slot>
      <svg viewBox="0 0 48 42" className="ml-[23px] h-[42px] w-12 shrink-0">
        <path d="M12 0 H34 L48 20 L36 42 H12 L0 21 Z" fill="#75769a" />
        <path d="M12 0 H34 L24 9 Z" fill="#b3b5dd" />
        <path d="M34 0 L48 20 L29 20 L24 9 Z" fill="#c4552f" />
        <path d="M0 21 L12 0 L24 9 L9 20 Z" fill="#9a9bc4" />
        <path d="M29 20 L48 20 L36 42 L27 35 Z" fill="#8c3b3c" />
        <path d="M12 42 L27 35 L36 42 Z" fill="#6f2226" />
        <path d="M0 21 L9 20 L12 42 Z" fill="#666c7a" />
      </svg>
      <Slot className="ml-[22px] w-[74px]" running>
        <ChromeLogo className="h-[45px] w-[45px]" />
      </Slot>
      <svg viewBox="0 0 42 42" className="ml-[25px] h-[42px] w-[42px] shrink-0">
        <path d="M24 10 H41 V32 H24 Z" fill="#fff" />
        <path d="M24 11 L32 22 L41 11" fill="none" stroke="#0b6bc0" strokeWidth="2.500" />
        <path d="M0 4 L25 0 V42 L0 38 Z" fill="#0b6bc0" />
        <ellipse cx="12" cy="21" rx="5" ry="7" fill="none" stroke="#fff" strokeWidth="3.200" />
      </svg>
      <svg viewBox="0 0 42 42" className="ml-[33px] h-[42px] w-[42px] shrink-0">
        <rect x="24" y="6" width="17" height="30" fill="#f3ded8" />
        <path d="M27 27 H38 M27 32 H38" stroke="#d04423" strokeWidth="2.500" />
        <circle cx="31" cy="16" r="6.500" fill="#d04423" />
        <path d="M0 4 L25 0 V42 L0 38 Z" fill="#d04423" />
        <path d="M9 29 V14 H13 Q18 14 18 18.500 Q18 23 13 23 H9" fill="none" stroke="#fff" strokeWidth="3.400" />
      </svg>
      <svg viewBox="0 0 48 36" className="ml-[30px] h-9 w-12 shrink-0">
        <path d="M0 4 H13 L16 0 H32 L35 4 H48 V36 H0 Z" fill="#fff" />
        <circle cx="25" cy="20" r="9.500" fill="none" stroke="#000307" strokeWidth="3" />
        <path d="M34 10 Q43 22 31 33 H26 Q42 26 34 10 Z" fill="#000307" />
        <circle cx="41" cy="11" r="1.500" fill="#000307" />
      </svg>
      <svg viewBox="0 0 48 46" className="ml-[27px] h-[46px] w-12 shrink-0">
        <path d="M24 8 Q45 8 44 26 Q42 44 24 44 Q17 43 18 36 Q16 31 10 35 Q0 37 1 28 Q4 9 24 8 Z" fill="#b6d9ee" />
        <circle cx="9" cy="25" r="4" fill="#e2503e" />
        <circle cx="16" cy="18" r="4" fill="#68b849" />
        <circle cx="25" cy="14" r="4.500" fill="#f0b228" />
        <circle cx="20" cy="28" r="3" fill="#18242c" />
        <path d="M39 10 L30 36 L24 46 L25 34 L35 9 Z" fill="#de8a35" />
        <path d="M36 1 Q46 0 46 8 L39 12 L34 9 Z" fill="#dcae7c" />
      </svg>
      <svg viewBox="0 0 36 48" className="ml-[33px] h-12 w-9 shrink-0">
        <rect width="36" height="48" fill="#fff" />
        <path d="M5 5 H31 V12 H5 Z M5 17 H11 V22 H5 Z M15 17 H21 V22 H15 Z M25 17 H31 V22 H25 Z M5 27 H11 V32 H5 Z M15 27 H21 V32 H15 Z M25 27 H31 V32 H25 Z M5 37 H11 V42 H5 Z M15 37 H21 V42 H15 Z M25 37 H31 V42 H25 Z" fill="#000307" />
      </svg>
      <Slot className="ml-[29px] w-[72px]" running>
        <FaSkype className="h-[46px] w-[46px] text-[#0aa5e8]" />
        <div className="absolute top-[44px] left-[40px] flex h-[24px] w-[24px] items-center justify-center rounded-full border-2 border-white bg-[#ffa918] text-[16px] leading-none font-bold text-black">2</div>
      </Slot>
      <svg viewBox="0 0 39 39" className="ml-[27px] h-[39px] w-[39px] shrink-0">
        <rect width="39" height="39" rx="3" fill="#fff" />
        <path d="M3 0 H27 L0 12 V3 Z" fill="#73c5c7" />
        <path d="M27 0 H36 L39 3 V30 L34 20 Z" fill="#e9b52f" />
        <path d="M27 0 L19 3 L34 14 Z" fill="#8aa33a" />
        <path d="M0 12 L6 28 L0 32 Z" fill="#4ea66e" />
        <path d="M0 39 V33 L39 24 V36 L36 39 Z" fill="#dc2050" />
        <path d="M0 33 L12 29 V39 H0 Z" fill="#3f8f5c" />
        <path d="M25 14 Q20 10 16 14 Q14 18 20 19 Q27 21 24 25 Q20 28 15 24" fill="none" stroke="#2c2330" strokeWidth="3.400" />
      </svg>
      <Slot className="ml-[28px] w-[72px]" running>
        <svg viewBox="0 0 46 40" className="mb-[2px] h-10 w-[46px]">
          <path d="M38 5 L44 6 V36 L36 38 Z" fill="#c48b35" />
          <path d="M17 2 L40 5 L40 34 L36 40 L18 34 Z" fill="#d6e9ee" />
          <path d="M17 2 L38 4 L34 35 L1 31 Z" fill="#6fa5b2" />
          <path d="M14 10 L22 11 L16 32 L2 30 Z" fill="#4d8493" />
          <path d="M17 2 H40" stroke="#e9e9e9" strokeWidth="3" strokeDasharray="2 2" />
        </svg>
      </Slot>
      <Slot className="ml-[10px] w-[88px]" running active>
        <Fox className="h-[38px] w-[34px]" />
      </Slot>
      <svg viewBox="0 0 30 30" className="ml-[45px] h-[30px] w-[30px] shrink-0" fill="none" stroke="#fff" strokeWidth="2.200">
        <circle cx="21" cy="6" r="5" />
        <path d="M15 14 Q21 8 28 18" />
        <circle cx="9" cy="18" r="5" />
        <path d="M1 30 Q3 23 9 23 Q15 23 17 30" />
      </svg>
      <svg viewBox="0 0 33 32" className="ml-[49px] h-8 w-[33px] shrink-0">
        <path d="M1 1 L13 0 V16 H1 Z" fill="#e8792b" />
        <path d="M15 1 L32 3 V16 H14 Z" fill="#1b6fb4" />
        <path d="M0 17 H15 V29 H2 Z" fill="#58a23a" />
        <path d="M17 17 H32 V32 L17 30 Z" fill="#d4402a" />
        <path d="M11 0 L18 2 L16 16 L10 14 Z" fill="#eec03c" />
      </svg>
      <svg viewBox="0 0 32 22" className="ml-[32px] h-[22px] w-8 shrink-0">
        <path d="M0 0 H32 L21 22 L16 11 L11 22 Z" fill="#f7a21b" />
        <path d="M20 0 H32 L21 22 L17 12 Z" fill="#fdbf2d" />
      </svg>
      <svg viewBox="0 0 33 22" className="ml-[32px] h-[22px] w-[33px] shrink-0" fill="#fff">
        <path d="M6 20 Q-1 18 1 12 Q2 8 6 8 Q8 0 16 1 Q21 1 23 5 Q15 4 13 10 Q7 11 6 20 Z" />
        <path d="M11 21 Q7 18 9 14 Q11 11 15 12 Q18 6 24 8 Q28 10 28 14 Q33 14 33 18 Q32 21 29 21 Z" />
      </svg>
      <svg viewBox="0 0 32 32" className="ml-[32px] h-8 w-8 shrink-0">
        <path d="M5 0 L21 14 L18 17 L4 6 Z" fill="#9aa7b4" />
        <path d="M1 16 Q12 8 24 14 L30 22 Q22 26 14 22 Z" fill="#b7d5e6" />
        <ellipse cx="14" cy="16" rx="7" ry="4" fill="#2bc4e8" />
        <path d="M22 20 L31 22 L26 26 Z" fill="#2b6fd0" />
        <path d="M17 24 H20 V30 H26 V32 H10 V30 H17 Z" fill="#a5a5a0" />
      </svg>
      <div className="ml-[36px] flex h-[30px] w-[23px] shrink-0 items-center justify-center rounded-[10px] bg-[#0a7cf0]">
        <FaBluetoothB className="h-[22px] w-[16px] text-white" />
      </div>
      <svg viewBox="0 0 30 30" className="ml-[39px] h-[30px] w-[30px] shrink-0">
        <path d="M13 0 Q8 4 1 4 V12 H12 Z M14 0 Q19 4 26 4 V12 H14 Z M1 14 H12 V27 Q1 22 1 14 Z M14 14 H26 Q26 22 14 27 Z" fill="#fff" />
        <circle cx="21" cy="21" r="9" fill="#12924a" />
        <path d="M16.500 21 L20 24.500 L25.500 18" fill="none" stroke="#fff" strokeWidth="2" />
      </svg>
      <div className="relative ml-[32px] h-[31px] w-[31px] shrink-0">
        <div className="h-[26px] w-[24px] rounded-[10px] bg-[#76b900]" />
        <div className="absolute right-0 bottom-0 flex h-[24px] w-[24px] items-center justify-center rounded-full border-2 border-white bg-[#ffa918] text-[16px] leading-none font-bold text-black">2</div>
      </div>
      <svg viewBox="0 0 24 24" className="ml-[36px] h-6 w-6 shrink-0">
        <path d="M1 24 L5 17 H19 L23 24 Z" fill="#8b8b8b" />
        <circle cx="12" cy="10.500" r="10" fill="#bdbdbd" />
        <circle cx="12" cy="11" r="5.500" fill="#333" />
        <circle cx="12" cy="11" r="3" fill="#49a9a9" />
      </svg>
      <ChromeLogo className="ml-[37px] h-[30px] w-[30px]" />
      <FaDropbox className="ml-[35px] h-[28px] w-[28px] shrink-0 text-white" />
      <svg viewBox="0 0 32 24" className="ml-[34px] h-6 w-8 shrink-0" fill="none" stroke="#fff" strokeWidth="2">
        <path d="M2 0 V4 M7 0 V4 M0 4 H9 V9 Q8 12 4.500 12 Q1 12 0 9 Z M4.500 12 V22 H29 V4 H11 M29 9 H31.500 V16 H29" />
        <path d="M9 20 V17 L14 10 V20 Z" fill="#fff" stroke="none" />
      </svg>
      <svg viewBox="0 0 32 28" className="ml-[32px] h-7 w-8 shrink-0" fill="none" stroke="#fff" strokeWidth="2">
        <path d="M1 9 H5 L11 3 V25 L5 19 H1 Z M15 10 Q18 14 15 18" />
        <path d="M20 6 Q25 14 20 22" />
        <path d="M25 2 Q33 14 25 26" stroke="#666" />
      </svg>
      <svg viewBox="0 0 30 30" className="ml-[35px] h-[30px] w-[30px] shrink-0">
        <path d="M0 3 L17 0 V28 L0 25 Z" fill="#80397b" />
        <path d="M5 19 V9 L11 19 V9" fill="none" stroke="#fff" strokeWidth="2" />
        <path d="M17 4 H26 V10 H17 Z" fill="#eee" />
        <path d="M15 11 L26 26 M27 11 L17 26" stroke="#fff" strokeWidth="2.600" />
        <circle cx="16" cy="27" r="2.500" fill="none" stroke="#fff" strokeWidth="2" />
        <circle cx="27" cy="27" r="2.500" fill="none" stroke="#fff" strokeWidth="2" />
      </svg>
      <svg viewBox="0 0 26 26" className="ml-[38px] h-[26px] w-[26px] shrink-0" fill="none" stroke="#fff" strokeWidth="2">
        <path d="M1 25 Q2 3 25 1 M7 25 Q8 9 25 7" stroke="#bbb" />
        <path d="M13 25 Q14 15 25 14" />
        <circle cx="22" cy="22" r="3" fill="#fff" stroke="none" />
      </svg>
      <svg viewBox="0 0 33 32" className="ml-[41px] h-8 w-[33px] shrink-0" fill="none" stroke="#fff" strokeWidth="2">
        <path d="M11 22 L14 12 L24 1 L28 4 L20 20 L12 25 Z M22 4 L26 8 M8 17 Q1 18 1 25 Q2 32 8 29 Q12 26 9 22 M26 15 Q33 16 30 20 Q27 24 20 22" />
      </svg>
      <Fit className="mt-[3px] ml-[38px] h-[17px] w-[44px] text-[24px]">ENG</Fit>
      <div className="ml-[27px] flex w-[120px] shrink-0 flex-col items-center">
        <Fit className="h-[17px] w-[55px] text-[24px]">13:02</Fit>
        <Fit className="mt-[20px] h-[17px] w-[120px] text-[24px]">24/01/2018</Fit>
      </div>
      <div className="relative ml-[37px] h-[48px] w-[48px] shrink-0">
        <svg viewBox="0 0 48 48" className="h-12 w-12">
          <path d="M0 1 H33 V25 H14 L8 30 V25 H0 Z" fill="#fff" />
          <path d="M6 7 H27 M6 13 H27 M6 19 H20" stroke="#000307" strokeWidth="2" />
          <circle cx="31" cy="31" r="16" fill="#2b2d30" stroke="#9a9a9a" strokeWidth="1.500" />
        </svg>
        <div className="absolute top-[15px] left-[15px] flex h-[32px] w-[32px] items-center justify-center text-[22px] leading-none font-semibold">3</div>
      </div>
      <div className="ml-[25px] h-full w-px bg-[#555]" />
    </div>
  );
}

export default function App() {
  return (
    <div className="relative flex h-[1824px] w-[2736px] flex-col overflow-hidden bg-[#f2f2f2] font-['Open_Sans',sans-serif]">
      <TabStrip />
      <Toolbar />
      <Bookmarks />
      <WalletPage />
      <DownloadBar />
      <Taskbar />
      <MetaMask />
    </div>
  );
}
